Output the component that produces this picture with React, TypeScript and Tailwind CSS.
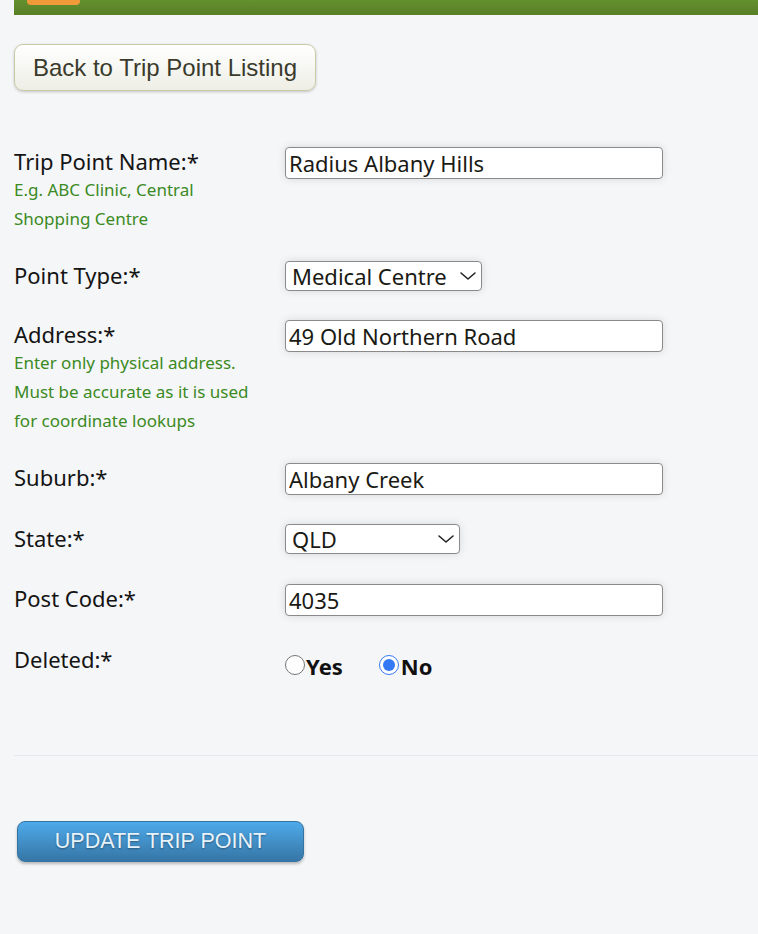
import React from "react";

const labelFont = { fontFamily: '"Noto Sans", "DejaVu Sans", sans-serif' };

function Chevron() {
  return (
    <svg width="18" height="10" viewBox="0 0 18 10" className="pointer-events-none absolute right-[5px] top-1/2 -translate-y-1/2">
      <path d="M2 2l7 6 7-6" fill="none" stroke="#222" strokeWidth="1.6" strokeLinecap="round" strokeLinejoin="round" />
    </svg>
  );
}

function Field({ value, width = "w-[378px]" }: { value: string; width?: string }) {
  return (
    <input
      readOnly
      value={value}
      className={`${width} h-[32px] rounded-[4px] border border-[#8a8a8a] bg-white px-[3px] text-[22px] text-[#1a1a14] shadow-[0_0_8px_rgba(0,0,0,0.12)] outline-none`}
    />
  );
}

function Select({ value, width }: { value: string; width: string }) {
  return (
    <div className={`relative ${width}`}>
      <select
        value={value}
        onChange={() => {}}
        className="h-[30px] w-full appearance-none rounded-[4px] border border-[#8a8a8a] bg-white pl-[6px] text-[22px] leading-[28px] text-[#1a1a14] shadow-[0_0_8px_rgba(0,0,0,0.12)] outline-none"
      >
        <option>{value}</option>
      </select>
      <Chevron />
    </div>
  );
}

function Row({ label, hints, children, gap = "mb-[29px]" }: { label: string; hints?: string[]; children: React.ReactNode; gap?: string }) {
  return (
    <div className={`flex ${gap}`}>
      <div className="w-[271px] shrink-0">
        <div className="text-[22px] leading-[28px] text-[#141414]">{label}</div>
        {hints && (
          <div className="text-[17px] leading-[29px] text-[#3b8a23]">
            {hints.map((h) => (
              <div key={h}>{h}</div>
            ))}
          </div>
        )}
      </div>
      <div>{children}</div>
    </div>
  );
}

export default function App() {
  return (
    <div className="min-h-[934px] w-[758px] overflow-hidden bg-[#f5f6f8]" style={labelFont}>
      {/* top bar */}
      <div className="ml-[14px] h-[15px] bg-gradient-to-b from-[#64902e] to-[#587f26] pl-[13px]">
        <div className="h-[5px] w-[53px] rounded-b-[4px] bg-[#f09a3a]" />
      </div>

      <div className="px-[14px]">
        <button
          type="button"
          className="mt-[29px] h-[47px] w-[302px] rounded-[9px] border border-[#c9c9a6] bg-gradient-to-b from-white to-[#eeeee6] text-[24px] text-[#3a3b2c] shadow-[0_1px_3px_rgba(0,0,0,0.2)]"
          style={{ fontFamily: '"Liberation Sans", Arial, sans-serif' }}
        >
          Back to Trip Point Listing
        </button>

        <div className="mt-[56px]">
          <Row label="Trip Point Name:*" hints={["E.g. ABC Clinic, Central", "Shopping Centre"]} gap="mb-[28px]">
            <Field value="Radius Albany Hills" />
          </Row>
          <Row label="Point Type:*">
            <Select value="Medical Centre" width="w-[197px]" />
          </Row>
          <Row
            label="Address:*"
            hints={["Enter only physical address.", "Must be accurate as it is used", "for coordinate lookups"]}
            gap="mb-[28px]"
          >
            <Field value="49 Old Northern Road" />
          </Row>
          <Row label="Suburb:*">
            <Field value="Albany Creek" />
          </Row>
          <Row label="State:*" gap="mb-[30px]">
            <Select value="QLD" width="w-[175px]" />
          </Row>
          <Row label="Post Code:*">
            <Field value="4035" />
          </Row>
          <Row label="Deleted:*" gap="mb-0">
            <div className="mt-[1px] flex items-center text-[22px] font-bold text-[#111]">
              <label className="flex items-center">
                <input type="radio" name="deleted" readOnly className="m-0 h-[20px] w-[20px] accent-[#3478f6]" />
                <span className="ml-[1px] mt-[4px]">Yes</span>
              </label>
              <label className="ml-[36px] flex items-center">
                <input type="radio" name="deleted" readOnly checked className="m-0 h-[20px] w-[20px] accent-[#3478f6]" />
                <span className="ml-[2px] mt-[4px]">No</span>
              </label>
            </div>
          </Row>
        </div>
      </div>

      <div className="ml-[14px] mt-[72px] h-px bg-[#e6e7ea]" />

      <div className="px-[17px]">
        <button
          type="button"
          className="mt-[65px] h-[41px] w-[287px] rounded-[8px] border border-[#3573a0] bg-gradient-to-b from-[#4eaaea] to-[#3676a6] text-[21.5px] text-[#e8f2fa] shadow-[0_2px_3px_rgba(0,0,0,0.25)] [text-shadow:0_1px_2px_rgba(0,0,0,0.35)]"
          style={{ fontFamily: '"Liberation Sans", Arial, sans-serif' }}
        >
          UPDATE TRIP POINT
        </button>
      </div>
    </div>
  );
}
